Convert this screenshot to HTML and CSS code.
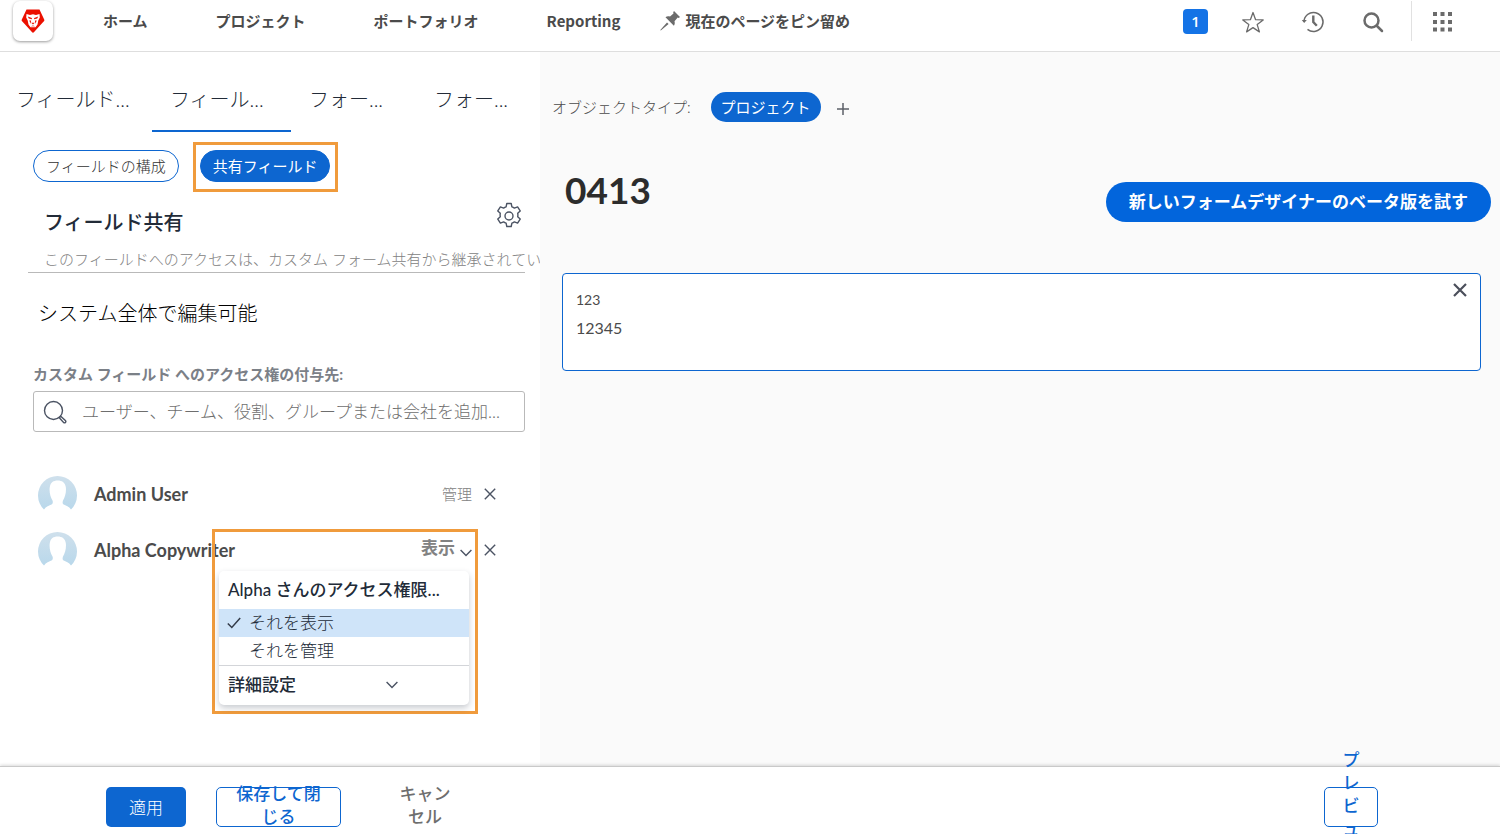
FILE: index.html
```html
<!DOCTYPE html>
<html lang="ja">
<head>
<meta charset="utf-8">
<meta name="viewport" content="width=device-width, initial-scale=1">
<title>フィールド共有</title>
<link rel="stylesheet" href="styles.css">
</head>
<body>
<header class="topbar">
  <a class="logo" href="#" aria-label="Workfront">
    <svg width="24" height="24" viewBox="0 0 24 24">
      <path fill="#eb1000" d="M5.500 0.500h13l4.800 10.200c0.200 0.500 0.100 1-0.200 1.400l-10 11c-0.600 0.700-1.600 0.700-2.200 0l-10-11c-0.300-0.400-0.400-0.900-0.200-1.400z"/>
      <path fill="#fff" d="M5.500 5l3.500 1 3-0.700 3 0.700 3.500-1 0.300 3.500-1.500 3-0.800 4-2 2.800h-5l-2-2.800-0.800-4-1.500-3z"/>
      <path fill="#eb1000" d="M6.800 7.600l4 1.400 0.200 1.300-3.200-0.900zM17.200 7.600l-4 1.400-0.200 1.300 3.200-0.900zM8.300 11.500l1.300 3.300 0.500-3.300zM15.700 11.500l-1.300 3.300-0.500-3.300zM10.200 13.800h3.600l-1.800 1.600zM9.800 17.300l2.200-0.900 2.200 0.900z"/>
    </svg>
  </a>
  <nav class="mainnav">
    <a href="#">ホーム</a>
    <a href="#">プロジェクト</a>
    <a href="#">ポートフォリオ</a>
    <a href="#">Reporting</a>
  </nav>
  <button class="pin" type="button">
    <svg width="20" height="20" viewBox="0 0 20 20" fill="#6b6b6b"><path d="M14 0l6 6-1.300 0.900-1-0.300-3.200 3.600c0.500 1.800 0.300 3.300-0.600 4.500l-8.400-8.400c1.200-1 2.700-1.200 4.500-0.700l3.500-3.200-0.300-1.200zM7 11.400l1.600 1.600-7.800 6.600-0.500-0.500z"/></svg>
    現在のページをピン留め
  </button>
  <div class="tools">
    <button class="badge" type="button" aria-label="通知">1</button>
    <button class="tool" type="button" aria-label="お気に入り">
      <svg width="24" height="24" viewBox="0 0 24 24" fill="none" stroke="#6b6b6b" stroke-width="1.300" stroke-linejoin="round"><path d="M12 2.500l2.600 7.200 7.600 0.200-6 4.700 2.200 7.300-6.400-4.300-6.400 4.300 2.200-7.300-6-4.700 7.600-0.200z"/></svg>
    </button>
    <button class="tool" type="button" aria-label="履歴">
      <svg width="24" height="24" viewBox="0 0 24 24" fill="none" stroke="#6b6b6b" stroke-width="1.500"><path d="M3 12a9.500 9.500 0 1 1 3.500 7.300"/><path d="M0.800 10h5l-2.600 3z" fill="#6b6b6b" stroke="none"/><path d="M12.300 5.500v6.500l3.500 3.700" stroke-width="2.400"/></svg>
    </button>
    <button class="tool" type="button" aria-label="検索">
      <svg width="24" height="24" viewBox="0 0 24 24" fill="none" stroke="#6b6b6b" stroke-width="2.500" stroke-linecap="round"><circle cx="10.500" cy="10.500" r="7"/><path d="M16 16l5 5"/></svg>
    </button>
    <span class="divider"></span>
    <button class="tool" type="button" aria-label="アプリ">
      <svg width="24" height="24" viewBox="0 0 24 24" fill="#6b6b6b"><path d="M3 2h4v4H3zM10.500 2h4v4h-4zM18 2h4v4h-4zM3 10h4v4H3zM10.500 10h4v4h-4zM18 10h4v4h-4zM3 17.500h4v4H3zM10.500 17.500h4v4h-4zM18 17.500h4v4h-4z"/></svg>
    </button>
  </div>
</header>

<main class="workspace">
  <section class="panel">
    <div class="tabs" role="tablist">
      <button class="tab" type="button" role="tab">フィールド...</button>
      <button class="tab tab-active" type="button" role="tab" aria-selected="true">フィール...</button>
      <button class="tab" type="button" role="tab">フォー...</button>
      <button class="tab" type="button" role="tab">フォー...</button>
    </div>
    <div class="pills">
      <button class="pill" type="button">フィールドの構成</button>
      <div class="callout"><button class="pill pill-on" type="button">共有フィールド</button></div>
    </div>
    <div class="sharing">
      <div class="sharing-head">
        <h2>フィールド共有</h2>
        <button class="gear" type="button" aria-label="設定">
          <svg width="26" height="28" viewBox="0 0 26 28" fill="none" stroke="#4b5363" stroke-width="1.400" stroke-linejoin="round"><path d="M10.800 1.500h4.400l0.700 3.300c0.900 0.300 1.700 0.700 2.500 1.300l3.200-1.200 2.600 4-2.500 2.300c0.200 1 0.200 2.600 0 3.600l2.500 2.300-2.600 4-3.200-1.200c-0.800 0.600-1.600 1-2.500 1.300l-0.700 3.300h-4.400l-0.700-3.300c-0.900-0.300-1.700-0.700-2.500-1.300l-3.200 1.200-2.600-4 2.500-2.300c-0.200-1-0.200-2.600 0-3.600l-2.500-2.300 2.600-4 3.200 1.200c0.800-0.600 1.600-1 2.500-1.300z"/><circle cx="13" cy="14" r="4"/></svg>
        </button>
      </div>
      <p class="hint">このフィールドへのアクセスは、カスタム フォーム共有から継承されています</p>
    </div>
    <p class="scope">システム全体で編集可能</p>
    <div class="grant">
      <label for="grantee">カスタム フィールド へのアクセス権の付与先:</label>
      <div class="search">
        <svg width="24" height="24" viewBox="0 0 24 24" fill="none" stroke="#4b5363" stroke-width="1.400"><circle cx="10.500" cy="10.500" r="9"/><path d="M16.300 17.700l1.400-1.400 4.900 4.500a1.300 1.300 0 0 1-1.800 1.800z"/></svg>
        <input id="grantee" type="text" placeholder="ユーザー、チーム、役割、グループまたは会社を追加...">
      </div>
    </div>
    <ul class="people">
      <li class="person">
        <svg class="avatar" width="39" height="39" viewBox="0 0 39 39"><defs><linearGradient id="sky" x1="0" y1="0" x2="0" y2="1"><stop offset="0" stop-color="#cfe0ec"/><stop offset="1" stop-color="#b9d8eb"/></linearGradient></defs><path fill="url(#sky)" d="M6 34.500A19.500 19.500 0 1 1 33 34.500C31 31.500 28 30.500 25.200 29.300C24.300 28.500 24.600 26.500 25 25.500C27 22.500 28.500 17 27.800 12C27 7.500 24 5.500 19.700 5.500S12.500 7.500 11.800 12C11 17 12.500 22.500 14.500 25.500C15 26.500 15 28.500 14 29.300C11 30.500 8 31.500 6 34.500z"/></svg>
        <span class="name">Admin User</span>
        <span class="level">管理</span>
        <button class="remove" type="button" aria-label="Admin User を削除"><svg width="12" height="12" viewBox="0 0 12 12" stroke="#4b5363" stroke-width="1.400"><path d="M0.800 0.800l10.400 10.400M11.200 0.800L0.800 11.200"/></svg></button>
      </li>
      <li class="person">
        <svg class="avatar" width="39" height="39" viewBox="0 0 39 39"><path fill="url(#sky)" d="M6 34.500A19.500 19.500 0 1 1 33 34.500C31 31.500 28 30.500 25.200 29.300C24.300 28.500 24.600 26.500 25 25.500C27 22.500 28.500 17 27.800 12C27 7.500 24 5.500 19.700 5.500S12.500 7.500 11.800 12C11 17 12.500 22.500 14.500 25.500C15 26.500 15 28.500 14 29.300C11 30.500 8 31.500 6 34.500z"/></svg>
        <span class="name">Alpha Copywriter</span>
        <button class="level level-open" type="button" aria-expanded="true">表示<svg width="12" height="8" viewBox="0 0 12 8" fill="none" stroke="#4b5363" stroke-width="1.400"><path d="M0.600 1l5.400 5.600L11.400 1"/></svg></button>
        <button class="remove" type="button" aria-label="Alpha Copywriter を削除"><svg width="12" height="12" viewBox="0 0 12 12" stroke="#4b5363" stroke-width="1.400"><path d="M0.800 0.800l10.400 10.400M11.200 0.800L0.800 11.200"/></svg></button>
        <div class="menu-frame">
          <div class="menu" role="menu">
            <p class="menu-title">Alpha さんのアクセス権限...</p>
            <button class="option option-on" type="button" role="menuitemradio" aria-checked="true"><svg width="14" height="12" viewBox="0 0 14 12" fill="none" stroke="#333b49" stroke-width="1.500"><path d="M0.800 6.500l4 4L13.200 1"/></svg>それを表示</button>
            <button class="option" type="button" role="menuitemradio" aria-checked="false">それを管理</button>
            <button class="advanced" type="button">詳細設定<svg width="12" height="8" viewBox="0 0 12 8" fill="none" stroke="#4b5363" stroke-width="1.400"><path d="M0.600 1l5.400 5.600L11.400 1"/></svg></button>
          </div>
        </div>
      </li>
    </ul>
  </section>

  <section class="canvas">
    <div class="types">
      <span>オブジェクトタイプ:</span>
      <button class="chip" type="button">プロジェクト</button>
      <button class="add" type="button" aria-label="追加"><svg width="12" height="12" viewBox="0 0 12 12" stroke="#5c6068" stroke-width="1.500"><path d="M6 0v12M0 6h12"/></svg></button>
    </div>
    <div class="form-head">
      <h1>0413</h1>
      <button class="beta" type="button">新しいフォームデザイナーのベータ版を試す</button>
    </div>
    <article class="card">
      <div class="card-body">
        <span class="card-label">123</span>
        <span class="card-value">12345</span>
      </div>
      <button class="card-close" type="button" aria-label="閉じる"><svg width="14" height="14" viewBox="0 0 14 14" stroke="#4b4f5b" stroke-width="2.200"><path d="M1 1l12 12M13 1L1 13"/></svg></button>
    </article>
  </section>
</main>

<footer class="actions">
  <button class="btn btn-primary" type="button">適用</button>
  <button class="btn btn-save" type="button"><span>保存して閉じる</span></button>
  <button class="btn btn-cancel" type="button"><span>キャンセル</span></button>
  <button class="btn btn-preview" type="button"><span>プレビュー</span></button>
</footer>
</body>
</html>
```

FILE: styles.css
```css
* {
  box-sizing: border-box;
}

body {
  margin: 0;
  height: 100vh;
  overflow: hidden;
  display: grid;
  grid-template-rows: auto 1fr auto;
  font-family: Lato, "Noto Sans CJK JP", sans-serif;
  font-size: 15px;
  line-height: 22px;
  color: #4b4b4b;
  background: #fff;
}

h1, h2, p, ul {
  margin: 0;
  padding: 0;
}

button, input {
  font: inherit;
  color: inherit;
  padding: 0;
  border: 0;
  background: none;
}

svg {
  display: block;
  flex: none;
}

/* Top bar */
.topbar {
  display: flex;
  align-items: center;
  padding: 1px 46px 10px 13px;
  border-bottom: 1px solid #dedede;
  font-family: "Noto Sans CJK JP", sans-serif;
  font-weight: 700;
  white-space: nowrap;
}

.logo {
  display: grid;
  place-items: center;
  width: 40px;
  height: 40px;
  border-radius: 7px;
  background: #fff;
  box-shadow: 0 1px 3px rgba(0, 0, 0, 0.4);
}

.mainnav {
  display: flex;
  gap: 68px;
  margin-left: 50px;
}

.mainnav a {
  color: inherit;
  text-decoration: none;
}

.pin {
  display: flex;
  align-items: center;
  gap: 5px;
  margin-left: 40px;
}

.tools {
  display: flex;
  align-items: center;
  gap: 36px;
  margin-left: auto;
}

.tool {
  padding-top: 2px;
}

.badge {
  width: 25px;
  height: 25px;
  margin-right: -3px;
  border-radius: 4px;
  background: #1473e6;
  color: #fff;
  font-family: "Open Sans", sans-serif;
  font-weight: 600;
}

.divider {
  width: 1px;
  height: 40px;
  margin: 0 -18px 0 -10px;
  background: #e1e1e1;
}

/* Workspace */
.workspace {
  display: grid;
  grid-template-columns: 36% 1fr;
  min-height: 0;
}

.panel {
  overflow: hidden;
  background: #fff;
  font-weight: 300;
}

.tabs {
  display: grid;
  grid-template-columns: 152px 139px 125px 1fr;
}

.tab {
  height: 80px;
  padding: 16px 0 0 18px;
  border-bottom: 2px solid transparent;
  font-size: 20px;
  text-align: left;
  color: #222b38;
}

.tab:first-child {
  padding-left: 16px;
}

.tab-active {
  border-color: #0d66d0;
}

.pills {
  display: flex;
  align-items: flex-start;
  gap: 14px;
  padding: 10px 0 0 33px;
}

.pill {
  display: block;
  height: 32px;
  padding: 0 12px;
  border: 1px solid #0d66d0;
  border-radius: 16px;
  color: #323232;
}

.pills > .pill {
  margin-top: 8px;
}

.pill-on {
  background: #0d66d0;
  color: #fff;
  font-weight: 400;
}

.callout {
  padding: 5px 5px 7px 4px;
  border: 3px solid #f09b3c;
}

.sharing {
  margin: 10px 15px 0 28px;
  padding-left: 16px;
  border-bottom: 1px solid #b9b9b9;
}

.sharing-head {
  display: flex;
  align-items: flex-start;
  justify-content: space-between;
  padding-right: 3px;
}

.sharing h2 {
  padding-top: 6px;
  font-size: 20px;
  line-height: 28px;
  font-weight: 500;
  color: #222b38;
}

.hint {
  padding: 12px 0 2px;
  white-space: nowrap;
  color: #828282;
}

.scope {
  padding: 26px 0 0 38px;
  font-size: 20px;
  line-height: 28px;
  color: #000;
}

.grant {
  padding: 36px 15px 0 33px;
}

.grant label {
  display: block;
  font-weight: 700;
  color: #7b8087;
}

.search {
  display: flex;
  align-items: center;
  gap: 15px;
  height: 41px;
  margin-top: 6px;
  padding: 0 8px 0 9px;
  border: 1px solid #b9b9b9;
  border-radius: 3px;
}

.search input {
  flex: 1;
  min-width: 0;
  height: 36px;
  font-size: 17px;
  outline: 0;
}

.search input::placeholder {
  color: #6e6e6e;
  opacity: 1;
}

.people {
  margin-top: 34px;
  list-style: none;
}

.person {
  position: relative;
  display: flex;
  align-items: center;
  height: 56px;
  padding: 0 44px 0 38px;
}

.name {
  margin-left: 17px;
  font-size: 18px;
  font-weight: 700;
}

.level {
  margin-left: auto;
  color: #828282;
}

.level-open {
  display: flex;
  align-items: center;
  gap: 5px;
  padding-bottom: 4px;
  font-size: 17px;
  font-weight: 700;
}

.level-open svg {
  margin-top: 10px;
}

.remove {
  margin-left: 12px;
}

/* Access menu, laid over the list */
.menu-frame {
  position: absolute;
  top: 7px;
  right: 62px;
  width: 266px;
  padding: 39px 6px 6px 4px;
  border: 3px solid #f09b3c;
  pointer-events: none;
}

.menu {
  pointer-events: auto;
  border-radius: 5px;
  background: #fff;
  box-shadow: 0 3px 6px rgba(40, 50, 70, 0.25);
  font-size: 17px;
  color: #222b38;
}

.menu-title {
  padding: 8px 9px;
  font-weight: 500;
}

.option {
  display: flex;
  align-items: center;
  gap: 8px;
  width: 100%;
  height: 28px;
  padding-left: 30px;
}

.option-on {
  padding-left: 8px;
  background: #cfe4f9;
}

.advanced {
  display: flex;
  align-items: center;
  justify-content: space-between;
  width: 100%;
  height: 40px;
  padding: 0 71px 2px 9px;
  border-top: 1px solid #d3d5d9;
  font-weight: 500;
}

/* Form canvas */
.canvas {
  padding: 40px 19px 0 22px;
  background: #fafafa;
}

.types {
  display: flex;
  align-items: center;
  margin-left: -10px;
  font-weight: 300;
}

.chip {
  height: 30px;
  margin-left: 20px;
  padding: 0 10px;
  border-radius: 15px;
  background: #0d66d0;
  color: #fff;
  font-weight: 400;
}

.add {
  margin: 4px 0 0 16px;
}

.form-head {
  display: flex;
  align-items: flex-start;
  justify-content: space-between;
  margin: 44px -10px 0 3px;
}

.form-head h1 {
  font-size: 37px;
  line-height: 48px;
  color: #2c2c2c;
}

.beta {
  height: 40px;
  margin-top: 16px;
  padding: 0 23px;
  border-radius: 20px;
  background: #0265dc;
  color: #fff;
  font-size: 17px;
  font-weight: 700;
}

.card {
  display: flex;
  align-items: flex-start;
  justify-content: space-between;
  min-height: 98px;
  margin-top: 51px;
  padding: 9px 13px;
  border: 1px solid #0d66d0;
  border-radius: 4px;
  background: #fff;
}

.card-body {
  display: grid;
  gap: 6px;
  padding-top: 6px;
}

.card-label {
  font-size: 14px;
}

.card-value {
  font-size: 16px;
}

/* Footer actions */
.actions {
  position: relative;
  display: flex;
  padding: 20px 122px 7px 106px;
  background: #fff;
  border-top: 1px solid #c9c9c9;
  box-shadow: 0 -1px 3px rgba(0, 0, 0, 0.15);
}

.btn {
  display: flex;
  align-items: center;
  justify-content: center;
  height: 40px;
  border: 1px solid transparent;
  border-radius: 5px;
  font-size: 17px;
  line-height: 23px;
  font-weight: 500;
}

.btn-primary {
  width: 80px;
  background: #0d66d0;
  color: #fff;
  font-weight: 300;
}

.btn-save {
  width: 125px;
  margin-left: 30px;
  padding: 0 16px 4px;
  border-color: #0d66d0;
  color: #0d66d0;
}

.btn-cancel {
  width: 92px;
  margin-left: 38px;
  padding: 0 16px 4px;
  color: #6e6e6e;
}

.btn-preview {
  width: 54px;
  margin-left: auto;
  padding: 0 17px 4px;
  border-color: #0d66d0;
  color: #0d66d0;
  word-break: break-all;
  line-break: anywhere;
}
```
